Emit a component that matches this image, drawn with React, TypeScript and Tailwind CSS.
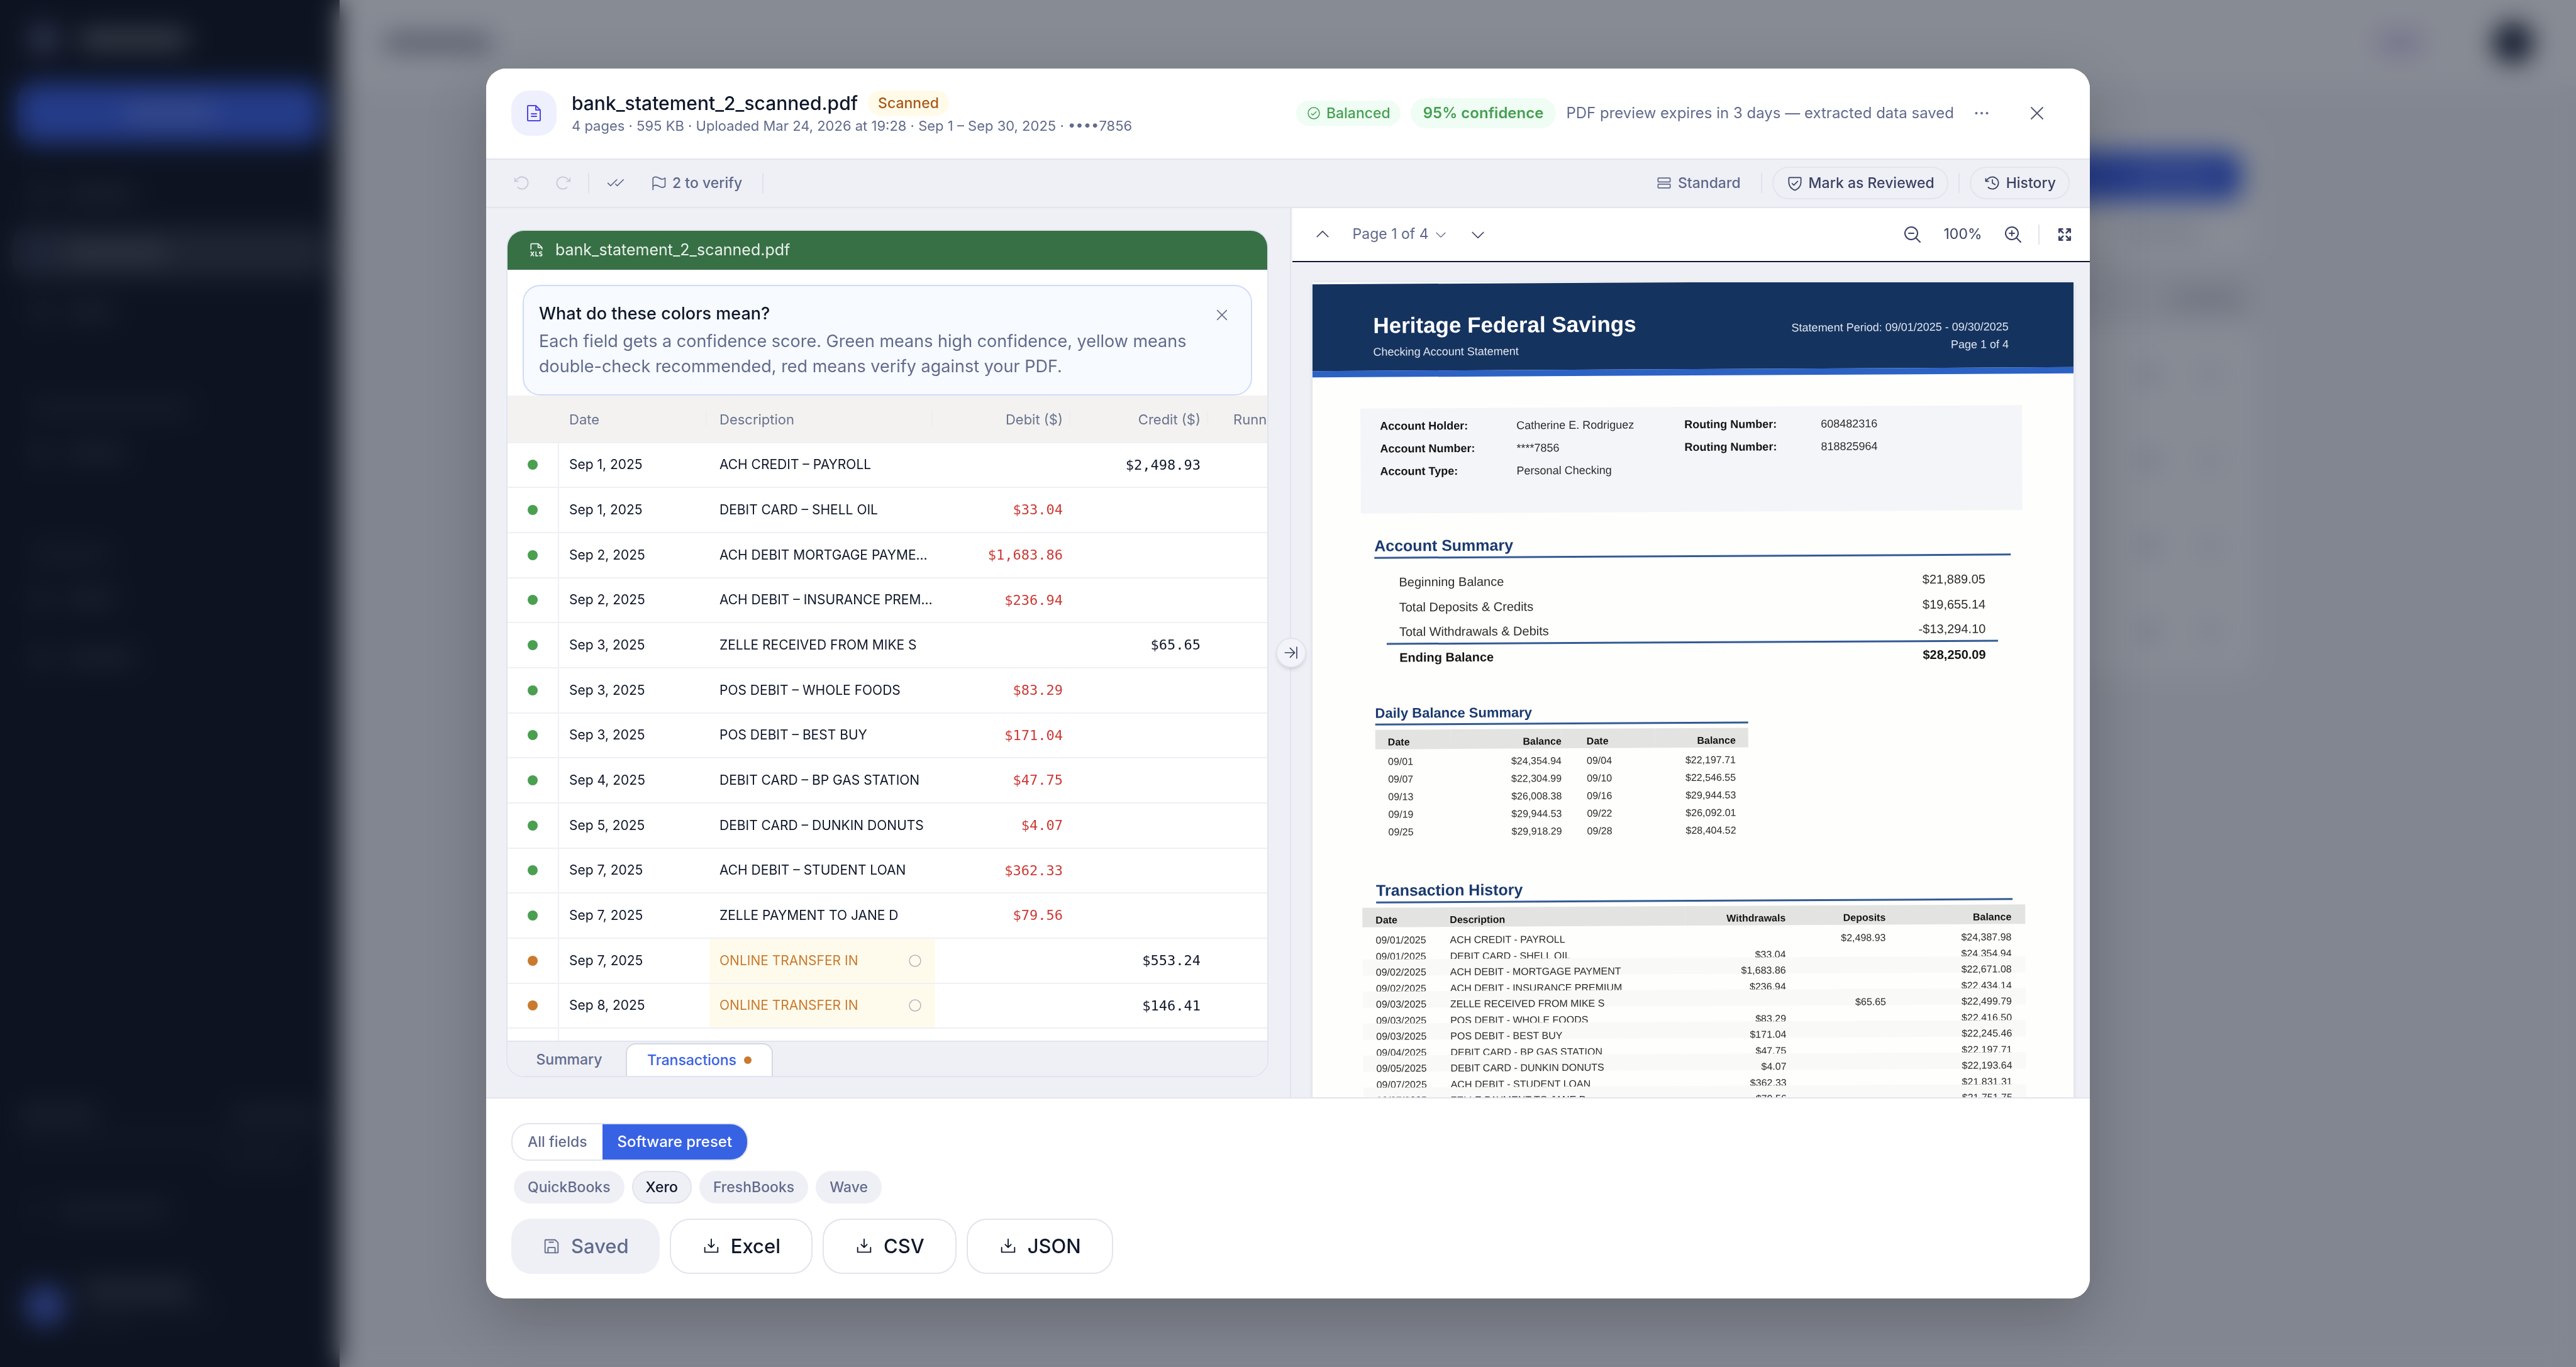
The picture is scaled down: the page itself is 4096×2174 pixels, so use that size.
import { clsx } from 'clsx'
import {
  PiArrowClockwise,
  PiArrowCounterClockwise,
  PiArrowLineRight,
  PiArrowsOutBold,
  PiCaretDown,
  PiCaretUp,
  PiCheckCircle,
  PiChecks,
  PiCircle,
  PiClockCounterClockwise,
  PiDotsThreeBold,
  PiDownloadSimple,
  PiFileText,
  PiFileXls,
  PiFlag,
  PiFloppyDisk,
  PiMagnifyingGlassMinus,
  PiMagnifyingGlassPlus,
  PiRows,
  PiShieldCheck,
  PiX,
} from 'react-icons/pi'

type Row = { date: string; description: string; debit?: string; credit?: string; review?: boolean }

const ROWS: Row[] = [
  { date: 'Sep 1, 2025', description: 'ACH CREDIT – PAYROLL', credit: '$2,498.93' },
  { date: 'Sep 1, 2025', description: 'DEBIT CARD – SHELL OIL', debit: '$33.04' },
  { date: 'Sep 2, 2025', description: 'ACH DEBIT MORTGAGE PAYME…', debit: '$1,683.86' },
  { date: 'Sep 2, 2025', description: 'ACH DEBIT – INSURANCE PREM…', debit: '$236.94' },
  { date: 'Sep 3, 2025', description: 'ZELLE RECEIVED FROM MIKE S', credit: '$65.65' },
  { date: 'Sep 3, 2025', description: 'POS DEBIT – WHOLE FOODS', debit: '$83.29' },
  { date: 'Sep 3, 2025', description: 'POS DEBIT – BEST BUY', debit: '$171.04' },
  { date: 'Sep 4, 2025', description: 'DEBIT CARD – BP GAS STATION', debit: '$47.75' },
  { date: 'Sep 5, 2025', description: 'DEBIT CARD – DUNKIN DONUTS', debit: '$4.07' },
  { date: 'Sep 7, 2025', description: 'ACH DEBIT – STUDENT LOAN', debit: '$362.33' },
  { date: 'Sep 7, 2025', description: 'ZELLE PAYMENT TO JANE D', debit: '$79.56' },
  { date: 'Sep 7, 2025', description: 'ONLINE TRANSFER IN', credit: '$553.24', review: true },
  { date: 'Sep 8, 2025', description: 'ONLINE TRANSFER IN', credit: '$146.41', review: true },
]

const ACCOUNT_INFO = [
  ['Account Holder:', 'Catherine E. Rodriguez', 'Routing Number:', '608482316'],
  ['Account Number:', '****7856', 'Routing Number:', '818825964'],
  ['Account Type:', 'Personal Checking', '', ''],
]

const SUMMARY = [
  ['Beginning Balance', '$21,889.05'],
  ['Total Deposits & Credits', '$19,655.14'],
  ['Total Withdrawals & Debits', '-$13,294.10'],
]

const DAILY = [
  ['09/01', '$24,354.94', '09/04', '$22,197.71'],
  ['09/07', '$22,304.99', '09/10', '$22,546.55'],
  ['09/13', '$26,008.38', '09/16', '$29,944.53'],
  ['09/19', '$29,944.53', '09/22', '$26,092.01'],
  ['09/25', '$29,918.29', '09/28', '$28,404.52'],
]

const HISTORY = [
  ['09/01/2025', 'ACH CREDIT - PAYROLL', '', '$2,498.93', '$24,387.98'],
  ['09/01/2025', 'DEBIT CARD - SHELL OIL', '$33.04', '', '$24,354.94'],
  ['09/02/2025', 'ACH DEBIT - MORTGAGE PAYMENT', '$1,683.86', '', '$22,671.08'],
  ['09/02/2025', 'ACH DEBIT - INSURANCE PREMIUM', '$236.94', '', '$22,434.14'],
  ['09/03/2025', 'ZELLE RECEIVED FROM MIKE S', '', '$65.65', '$22,499.79'],
  ['09/03/2025', 'POS DEBIT - WHOLE FOODS', '$83.29', '', '$22,416.50'],
  ['09/03/2025', 'POS DEBIT - BEST BUY', '$171.04', '', '$22,245.46'],
  ['09/04/2025', 'DEBIT CARD - BP GAS STATION', '$47.75', '', '$22,197.71'],
  ['09/05/2025', 'DEBIT CARD - DUNKIN DONUTS', '$4.07', '', '$22,193.64'],
  ['09/07/2025', 'ACH DEBIT - STUDENT LOAN', '$362.33', '', '$21,831.31'],
  ['09/07/2025', 'ZELLE PAYMENT TO JANE D', '$79.56', '', '$21,751.75'],
]

function Bar({ className }: { className: string }) {
  return <div className={clsx('rounded-full', className)} />
}

function NavItem({ width, active }: { width: string; active?: boolean }) {
  return (
    <div className={clsx('flex h-20 items-center gap-6 rounded-3xl px-7', active && 'bg-[#2e323b]')}>
      <div className={clsx('size-8 rounded-lg', active ? 'bg-[#26345c]' : 'bg-white/10')} />
      <Bar className={clsx('h-5', width, active ? 'bg-white/20' : 'bg-white/15')} />
    </div>
  )
}

// Everything here sits behind the dialog and is blurred by the overlay.
function AppShell() {
  return (
    <div className="flex h-full bg-[#f5f5f8]" aria-hidden="true">
      <div className="flex w-[540px] shrink-0 flex-col bg-[#0b0f18] px-5 pt-10 pb-[60px]">
        <div className="flex items-center gap-8 px-7">
          <div className="size-11 rounded-xl bg-[#54577a]" />
          <Bar className="h-7 w-44 bg-white/40" />
        </div>
        <div className="mx-2 mt-12 flex h-24 items-center justify-center rounded-3xl bg-[#395fe6]">
          <Bar className="h-6 w-36 bg-white/25" />
        </div>
        <div className="mt-10 flex flex-col gap-[14px]">
          <NavItem width="w-28" />
          <NavItem width="w-40" active />
          <NavItem width="w-20" />
        </div>
        <Bar className="mx-7 mt-26 h-5 w-64 bg-white/10" />
        <div className="mt-5">
          <NavItem width="w-24" />
        </div>
        <Bar className="mx-7 mt-28 h-5 w-32 bg-white/10" />
        <div className="mt-5 flex flex-col gap-[14px]">
          <NavItem width="w-20" />
          <NavItem width="w-28" />
        </div>
        <div className="mt-auto flex justify-between px-2">
          <Bar className="h-5 w-32 bg-white/15" />
          <Bar className="h-5 w-36 bg-white/12" />
        </div>
        <Bar className="mx-2 mt-6 h-2 bg-white/10" />
        <Bar className="mt-6 mr-10 h-4 w-32 self-end bg-white/8" />
        <div className="mt-[60px] flex gap-8 px-5">
          <Bar className="size-5 bg-white/10" />
          <Bar className="h-5 w-44 bg-white/12" />
        </div>
        <div className="mt-26 flex items-center gap-6 px-5">
          <div className="size-16 rounded-full bg-[#4560d0]" />
          <div className="flex flex-col gap-[10px]">
            <Bar className="h-6 w-44 bg-white/20" />
            <Bar className="h-4 w-52 bg-white/8" />
            <Bar className="h-4 w-20 bg-white/5" />
          </div>
        </div>
      </div>
      <div className="min-w-0 flex-1">
        <div className="flex h-34 items-center justify-between bg-white px-[68px]">
          <Bar className="h-7 w-44 bg-[#9a9cab]" />
          <div className="flex items-center gap-28">
            <Bar className="h-7 w-18 bg-[#cfbfea]" />
            <div className="size-16 rounded-full bg-[#0f172a]" />
          </div>
        </div>
        <div className="mx-auto mt-17 max-w-[2534px]">
          <div className="flex h-52 flex-col items-end gap-10 rounded-3xl bg-white p-5 pt-9">
            <div className="flex h-20 w-[420px] shrink-0 items-center justify-end rounded-3xl bg-[#395fe6] pr-12">
              <Bar className="h-6 w-32 bg-white/20" />
            </div>
            <Bar className="mr-16 h-5 w-32 shrink-0 bg-[#dcdce3]" />
          </div>
          <div className="mt-6 rounded-3xl bg-white">
            <div className="mb-3 flex h-20 items-center justify-end bg-[#eeeef1] px-5">
              <Bar className="h-6 w-28 bg-[#c9cbd4]" />
            </div>
            {[0, 1, 2, 3].map(i => (
              <div key={i} className="flex h-34 items-center justify-end gap-16 pr-14">
                <div className="size-8 rounded-full bg-[#d9d9e0]" />
                <div className="size-8 rounded-full bg-[#e8e8ee]" />
              </div>
            ))}
          </div>
        </div>
      </div>
    </div>
  )
}

function Divider() {
  return <span className="h-8 w-[2px] shrink-0 bg-[#e0e3ec]" />
}

function Header() {
  return (
    <div className="flex h-[145px] shrink-0 items-center gap-4 border-b-2 border-[#e2e4ee] bg-white px-10">
      <span className="mr-2 flex size-[72px] shrink-0 items-center justify-center rounded-[28px] bg-[#eef0fe] text-[#4f46e5]">
        <PiFileText size={32} />
      </span>
      <div className="mr-auto flex flex-col">
        <div className="flex h-10 items-center gap-4">
          <h1 id="dialog-title" className="text-[30px] font-medium text-[#0f172a]">bank_statement_2_scanned.pdf</h1>
          <span className="flex h-10 items-center rounded-full bg-[#fffbe8] px-4 text-[23px] font-medium text-[#a85a1c]">Scanned</span>
        </div>
        <p className="text-[22px] leading-8 text-[#626b8d]">
          4 pages · 595 KB · Uploaded Mar 24, 2026 at 19:28 · Sep 1 – Sep 30, 2025 · ••••7856
        </p>
      </div>
      <span className="flex h-10 items-center gap-2 rounded-full bg-[#effdf5] px-4 text-[23px] font-medium text-[#469f50]">
        <PiCheckCircle size={24} />
        Balanced
      </span>
      <span className="flex h-12 items-center rounded-full bg-[#effdf5] px-5 text-[24px] font-semibold text-[#469f50]">95% confidence</span>
      <span className="text-[24px] text-[#626b8d]">PDF preview expires in 3 days — extracted data saved</span>
      <button aria-label="More actions" className="flex h-16 w-14 items-center justify-center text-[#626b8d]">
        <PiDotsThreeBold size={32} />
      </button>
      <button aria-label="Close" className="flex h-16 w-[88px] items-center justify-center text-[#55597a]">
        <PiX size={32} />
      </button>
    </div>
  )
}

function Toolbar() {
  return (
    <div className="flex h-[77px] shrink-0 items-center border-b-2 border-[#e2e4ee] bg-[#eff0f6] pr-8 pl-6 text-[23px] font-medium text-[#5f688b]">
      <button aria-label="Undo" disabled className="flex h-14 w-[65px] items-center justify-center text-[#c6cad8]">
        <PiArrowCounterClockwise size={28} />
      </button>
      <button aria-label="Redo" disabled className="mr-2 flex h-14 w-[65px] items-center justify-center text-[#c6cad8]">
        <PiArrowClockwise size={28} />
      </button>
      <Divider />
      <button aria-label="Accept all" className="ml-2 flex h-14 w-[68px] items-center justify-center">
        <PiChecks size={28} />
      </button>
      <button className="flex h-14 items-center gap-2 px-5">
        <PiFlag size={28} />
        2 to verify
      </button>
      <span className="mr-auto ml-3 h-8 w-[2px] bg-[#e0e3ec]" />
      <button className="mr-4 flex h-[52px] items-center gap-2 px-4">
        <PiRows size={28} />
        Standard
      </button>
      <Divider />
      <button className="mx-4 flex h-[52px] items-center gap-2 rounded-[26px] border-2 border-[#e2e5ee] px-5 text-[#3a4163]">
        <PiShieldCheck size={28} />
        Mark as Reviewed
      </button>
      <Divider />
      <button className="ml-4 flex h-[52px] items-center gap-2 rounded-[26px] border-2 border-[#e2e5ee] px-5 text-[#3a4163]">
        <PiClockCounterClockwise size={28} />
        History
      </button>
    </div>
  )
}

function HeadCell({ label, className }: { label: string; className?: string }) {
  return (
    <th className={clsx('relative border-b-2 border-[#eff0f5] pt-1 font-normal whitespace-nowrap', className)}>
      {label}
      <span className="absolute top-6 right-1 h-6 w-[2px] bg-[#eceef3]" />
    </th>
  )
}

function TransactionsTable() {
  return (
    <div className="min-h-0 flex-1 overflow-hidden">
      <table className="w-[1420px] table-fixed border-separate border-spacing-0 text-[21px]">
        <colgroup>
          <col className="w-[82px]" />
          <col className="w-[239px]" />
          <col className="w-[359px]" />
          <col className="w-[219px]" />
          <col className="w-[219px]" />
          <col />
        </colgroup>
        <thead>
          <tr className="h-[76px] bg-[#f3f2f0] text-[22px] text-[#69738f]">
            <th aria-label="Confidence" className="border-b-2 border-[#eff0f5]" />
            <HeadCell label="Date" className="px-4 text-left" />
            <HeadCell label="Description" className="px-4 text-left" />
            <HeadCell label="Debit ($)" className="px-4 text-right" />
            <HeadCell label="Credit ($)" className="px-4 text-right" />
            <HeadCell label="Running Balance ($)" className="px-9 text-left" />
          </tr>
        </thead>
        <tbody className="text-[#0f172a]">
          {ROWS.map((row, i) => (
            <tr key={i} className={i % 3 === 0 ? 'h-[71px]' : 'h-[72px]'}>
              <td className="border-r-2 border-b-2 border-[#eff0f5]">
                <span className={clsx('mx-auto block size-4 rounded-full', row.review ? 'bg-[#c97a2f]' : 'bg-[#4a9f50]')} />
              </td>
              <td className="border-b-2 border-[#eff0f5] px-4">{row.date}</td>
              <td className={clsx('border-b-2 border-[#eff0f5] px-4 whitespace-nowrap', row.review && 'bg-[#fffbec] text-[#c97a2f]')}>
                <div className="flex items-center justify-between">
                  {row.description}
                  {row.review && <PiCircle size={24} className="mr-1 text-[#b4b5bd]" />}
                </div>
              </td>
              <td className="border-b-2 border-[#eff0f5] px-4 text-right font-['DejaVu_Sans_Mono',monospace] text-[22px] text-[#cb3a35]">{row.debit}</td>
              <td className="border-b-2 border-[#eff0f5] px-4 text-right font-['DejaVu_Sans_Mono',monospace] text-[22px]">{row.credit}</td>
              <td className="border-b-2 border-[#eff0f5]" />
            </tr>
          ))}
          <tr className="h-[72px]">
            <td className="border-r-2 border-[#eff0f5]" />
            <td colSpan={5} />
          </tr>
        </tbody>
      </table>
    </div>
  )
}

function SheetCard() {
  return (
    <div className="flex h-full flex-col overflow-hidden rounded-[28px] border-2 border-[#e0e4f0] bg-white">
      <div className="flex h-[62px] shrink-0 items-center gap-4 bg-[#387046] px-8 text-[25px] text-[#e8f0ea]">
        <PiFileXls size={28} />
        bank_statement_2_scanned.pdf
      </div>
      <div className="mx-6 mt-6 flex shrink-0 justify-between rounded-[28px] border-2 border-[#cfdcf8] bg-[#f7faff] p-6">
        <div className="text-[27px] leading-10 whitespace-nowrap">
          <h2 className="font-medium text-[#0f172a]">What do these colors mean?</h2>
          <p className="mt-1 text-[#626b8d]">
            Each field gets a confidence score. Green means high confidence, yellow means
            <br />
            double-check recommended, red means verify against your PDF.
          </p>
        </div>
        <button aria-label="Dismiss" className="flex size-11 shrink-0 items-center justify-center text-[#626b8d]">
          <PiX size={26} />
        </button>
      </div>
      <TransactionsTable />
      <div className="flex h-[56px] shrink-0 items-end border-t-2 border-[#e2e4ee] bg-[#eff0f6] pl-2 text-[23px] font-medium" role="tablist">
        <button role="tab" aria-selected="false" className="flex h-[52px] w-[180px] items-center justify-center text-[#626b8d]">Summary</button>
        <button role="tab" aria-selected="true" className="flex h-[52px] items-center gap-3 rounded-t-2xl border-2 border-b-0 border-[#d5d8e2] bg-white px-8 text-[#3862e4]">
          Transactions
          <span className="size-3 rounded-full bg-[#c97a2f]" />
        </button>
      </div>
    </div>
  )
}

function SectionTitle({ children, className }: { children: string; className?: string }) {
  return (
    <h3 className={clsx('border-b-[3px] border-[#335a94] font-bold text-[#1a3a70]', className)}>{children}</h3>
  )
}

// The scan went through the feeder slightly crooked, so the sheet leans a little.
function ScannedPage() {
  return (
    <div className="h-[1700px] overflow-hidden bg-[#fefefc] font-['Liberation_Sans',Arial,sans-serif] text-[#2c2c2c] shadow-[0_2px_6px_rgba(15,23,42,0.12)]">
      <div className="origin-top -rotate-[0.3deg]">
        <div className="-mx-2 flex h-[138px] justify-between bg-[#15335f] pr-[112px] pl-[104px] text-lg text-[#dfe5ee]">
          <div className="pt-[44px]">
            <p className="text-[35px] leading-[44px] font-bold text-white">Heritage Federal Savings</p>
            <p className="mt-2 leading-6">Checking Account Statement</p>
          </div>
          <div className="pt-[59px] text-right leading-7">
            <p>Statement Period: 09/01/2025 - 09/30/2025</p>
            <p>Page 1 of 4</p>
          </div>
        </div>
        <div className="-mx-2 h-[10px] bg-[#2b62c4]" />

        <div className="mt-[50px] mr-[83px] ml-[75px] h-[167px] bg-[#f3f5f8] pt-[10px] pl-[31px] text-lg">
          {ACCOUNT_INFO.map(([a, b, c, d], i) => (
            <div key={i} className="grid h-9 grid-cols-[217px_267px_217px_1fr] items-center">
              <b className="text-[#141414]">{a}</b>
              <span>{b}</span>
              <b className="text-[#141414]">{c}</b>
              <span>{d}</span>
            </div>
          ))}
        </div>

        <SectionTitle className="mt-[35px] mr-[102px] ml-24 h-[37px] text-[25px] leading-8">Account Summary</SectionTitle>
        <div className="mt-[17px] mr-[123px] ml-[115px] text-xl">
          {SUMMARY.map(([label, value], i) => (
            <div key={label} className={clsx('flex h-10 items-center justify-between px-5', i === 2 && 'border-b-[3px] border-[#335a94]')}>
              <span>{label}</span>
              <span>{value}</span>
            </div>
          ))}
          <div className="flex h-10 items-center justify-between px-5 font-bold text-[#141414]">
            <span>Ending Balance</span>
            <span>$28,250.09</span>
          </div>
        </div>

        <SectionTitle className="mt-[55px] ml-24 h-[33px] w-[593px] text-[22px] leading-7">Daily Balance Summary</SectionTitle>
        <table className="mt-[7px] ml-24 w-[593px] table-fixed text-base">
          <thead>
            <tr className="h-[31px] bg-[#e3e3e2] text-[#141414]">
              <th className="w-[120px] pt-2 pl-5 text-left leading-[23px]">Date</th>
              <th className="w-[176px] pt-2 text-right leading-[23px]">Balance</th>
              <th className="pt-2 pl-10 text-left leading-[23px]">Date</th>
              <th className="pt-2 pr-5 text-right leading-[23px]">Balance</th>
            </tr>
          </thead>
          <tbody>
            {DAILY.map(([d1, b1, d2, b2]) => (
              <tr key={d1} className="h-7">
                <td className="pt-3 pl-5 leading-4">{d1}</td>
                <td className="pt-3 text-right leading-4">{b1}</td>
                <td className="pt-3 pl-10 leading-4">{d2}</td>
                <td className="pt-3 pr-5 text-right leading-4">{b2}</td>
              </tr>
            ))}
          </tbody>
        </table>

        <SectionTitle className="mt-[68px] mr-[102px] ml-24 h-[37px] text-[25px] leading-8">Transaction History</SectionTitle>
        <table className="mt-[7px] ml-[74px] w-[1054px] table-fixed text-base">
          <thead>
            <tr className="h-[31px] bg-[#e3e3e2] text-[#141414]">
              <th className="w-[139px] pt-2 pl-[21px] text-left leading-[23px]">Date</th>
              <th className="w-[374px] pt-2 text-left leading-[23px]">Description</th>
              <th className="w-[160px] pt-2 text-right leading-[23px]">Withdrawals</th>
              <th className="w-[159px] pt-2 text-right leading-[23px]">Deposits</th>
              <th className="pt-2 pr-[22px] text-right leading-[23px]">Balance</th>
            </tr>
          </thead>
          <tbody>
            {HISTORY.map((row, i) => (
              <tr key={i} className={clsx(i > 0 && i % 2 === 0 && 'bg-[#f9f9f8]')}>
                {row.map((cell, j) => (
                  <td key={j} className={clsx('p-0', j === 0 && 'pl-[21px]', j > 1 && 'text-right', j === 4 && 'pr-[22px]')}>
                    <div className={clsx('pt-2 leading-[26px]', i % 2 ? 'h-[25px] overflow-hidden' : 'h-[26px]')}>{cell}</div>
                  </td>
                ))}
              </tr>
            ))}
          </tbody>
        </table>
      </div>
    </div>
  )
}

function PreviewPane() {
  return (
    <div className="flex min-w-0 flex-1 flex-col bg-[#eff0f6]">
      <div className="flex h-[86px] shrink-0 items-center border-b-2 border-[#12172f] bg-white pr-3 pl-5 text-[23px] text-[#3a4163]">
        <button aria-label="Previous page" className="flex size-14 items-center justify-center">
          <PiCaretUp size={28} />
        </button>
        <button className="ml-5 flex h-14 items-center gap-2 text-[#5f688b]">
          Page 1 of 4
          <PiCaretDown size={22} />
        </button>
        <button aria-label="Next page" className="mr-auto ml-5 flex size-14 items-center justify-center">
          <PiCaretDown size={28} />
        </button>
        <button aria-label="Zoom out" className="flex size-14 items-center justify-center">
          <PiMagnifyingGlassMinus size={32} />
        </button>
        <span className="w-[104px] text-center">100%</span>
        <button aria-label="Zoom in" className="mr-3 flex size-14 items-center justify-center">
          <PiMagnifyingGlassPlus size={32} />
        </button>
        <Divider />
        <button aria-label="Full screen" className="ml-3 flex size-14 items-center justify-center">
          <PiArrowsOutBold size={28} />
        </button>
      </div>
      <div className="min-h-0 flex-1 overflow-hidden pt-8 pr-[26px] pl-8">
        <ScannedPage />
      </div>
    </div>
  )
}

function Footer() {
  return (
    <div className="flex h-[320px] shrink-0 flex-col items-start border-t-2 border-[#e2e4ee] bg-white px-10 pt-[39px] text-[23px] font-medium text-[#626b8d]">
      <div className="flex h-[60px] overflow-hidden rounded-[28px] border-2 border-[#e2e4ee]">
        <button className="px-6">All fields</button>
        <button className="bg-[#3862e4] px-6 text-[24px] text-white">Software preset</button>
      </div>
      <div className="mt-4 flex gap-3 px-1">
        <button className="h-[52px] rounded-[26px] bg-[#eff0f6] px-[22px]">QuickBooks</button>
        <button className="h-[52px] rounded-[26px] border-2 border-[#e2e4ee] bg-[#eff0f6] px-5 text-[#0f172a]">Xero</button>
        <button className="h-[52px] rounded-[26px] bg-[#eff0f6] px-[22px]">FreshBooks</button>
        <button className="h-[52px] rounded-[26px] bg-[#eff0f6] px-[22px]">Wave</button>
      </div>
      <div className="mt-6 flex gap-4 text-[31px]">
        <button disabled className="flex h-[88px] items-center gap-4 rounded-[32px] bg-[#eff0f6] px-[49px]">
          <PiFloppyDisk size={30} />
          Saved
        </button>
        {['Excel', 'CSV', 'JSON'].map(format => (
          <button key={format} className="flex h-[88px] items-center gap-4 rounded-[32px] border-2 border-[#e2e4ee] px-[49px] text-[#0f172a]">
            <PiDownloadSimple size={30} />
            {format}
          </button>
        ))}
      </div>
    </div>
  )
}

export default function App() {
  return (
    <div className="relative h-screen overflow-hidden font-['Inter','Noto_Sans',sans-serif]">
      <AppShell />
      <div className="absolute inset-0 flex items-center justify-center bg-[#0f172a]/50 backdrop-blur-[20px]">
        <div
          role="dialog"
          aria-labelledby="dialog-title"
          className="flex h-[90vh] w-full max-w-[2550px] flex-col overflow-hidden rounded-[32px] bg-white shadow-[0_32px_96px_rgba(0,0,0,0.22)]"
        >
          <Header />
          <Toolbar />
          <div className="flex min-h-0 flex-1">
            <div className="w-[50.1%] shrink-0 bg-[#eff0f6] pt-[34px] pr-[34px] pb-8 pl-8">
              <SheetCard />
            </div>
            <div className="relative w-1 shrink-0 border-l-2 border-[#e2e4ee] bg-[#eff0f6]">
              <button
                aria-label="Collapse preview"
                className="absolute top-1/2 left-0 flex size-12 -translate-x-1/2 -translate-y-1/2 items-center justify-center rounded-full border-2 border-[#e2e4ee] bg-[#f3f4f9] text-[#3a4163] shadow-md"
              >
                <PiArrowLineRight size={26} />
              </button>
            </div>
            <PreviewPane />
          </div>
          <Footer />
        </div>
      </div>
    </div>
  )
}
